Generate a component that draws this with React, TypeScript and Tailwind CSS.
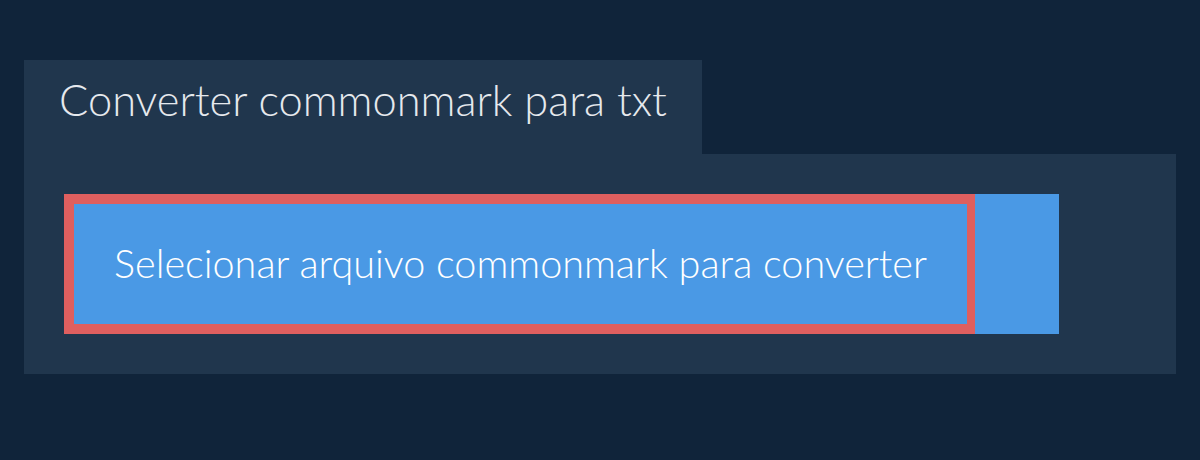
import React from 'react';

const App: React.FC = () => {
    return (
        <div className="w-[1200px] h-[460px] bg-[#10243a] pt-[60px] px-[24px] font-['Lato',sans-serif]">
            <div className="inline-block h-[94px] bg-[#20364d] px-[35px] pt-[18px]">
                <h1 className="text-[43.4px] font-light text-[#e6e9ed] leading-none whitespace-nowrap">Converter commonmark para txt</h1>
            </div>
            <div className="bg-[#20364d] p-[40px]">
                <div className="flex w-[995px] h-[140px] bg-[#4a99e5]">
                    <button className="w-[911px] h-full border-[10px] border-r-[8px] border-[#df5f5f] text-white text-[39.6px] font-light leading-none pb-[3px] whitespace-nowrap">
                        Selecionar arquivo commonmark para converter
                    </button>
                </div>
            </div>
        </div>
    );
};

export default App;
